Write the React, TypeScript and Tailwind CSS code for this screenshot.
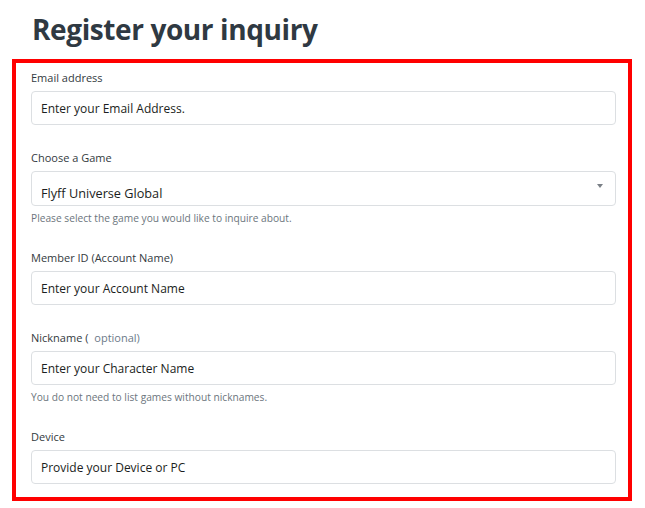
import React from "react";

const labelCls = "block text-[11px] leading-4 text-[#333a40] mb-[5px]";
const inputCls =
  "block w-full h-[34px] rounded-[4px] border border-[#dcdfe2] bg-white px-[9px] text-[12px] text-[#1b1e21] placeholder:text-[#1b1e21] outline-none";
const helpCls = "mt-[6px] text-[10.2px] leading-[13px] text-[#6c757d]";

function Field({ label, placeholder, help }: { label: React.ReactNode; placeholder: string; help?: string }) {
  return (
    <div>
      <label className={labelCls}>{label}</label>
      <input className={inputCls} placeholder={placeholder} />
      {help && <p className={helpCls}>{help}</p>}
    </div>
  );
}

export default function App() {
  return (
    <div className="min-h-screen bg-white px-3 pb-2 font-['Open_Sans',sans-serif]">
      <h1 className="ml-5 pt-[9px] pb-[10px] text-[28px] font-bold leading-10 tracking-[-0.4px] text-[#2f3942]">
        Register your inquiry
      </h1>

      <div className="mr-[1px] flex flex-col gap-[25px] border-4 border-[#ff0000] pl-[15px] pr-3 pt-[7px] pb-[13px]">
        <Field label="Email address" placeholder="Enter your Email Address." />

        <div>
          <label className={labelCls}>Choose a Game</label>
          <div className="relative">
            <select className="block h-[35px] w-full appearance-none rounded-[4px] border border-[#dcdfe2] bg-white px-[9px] pt-[10px] text-[12.7px] text-[#1b1e21] outline-none">
              <option>Flyff Universe Global</option>
            </select>
            <span className="pointer-events-none absolute right-[13px] top-[13px] h-0 w-0 border-x-[3px] border-t-[4px] border-x-transparent border-t-[#7a7f86]" />
          </div>
          <p className={helpCls}>Please select the game you would like to inquire about.</p>
        </div>

        <Field label="Member ID (Account Name)" placeholder="Enter your Account Name" />

        <Field
          label={
            <>
              Nickname ( <span className="ml-[3px] text-[#6c7a89]">optional)</span>
            </>
          }
          placeholder="Enter your Character Name"
          help="You do not need to list games without nicknames."
        />

        <Field label="Device" placeholder="Provide your Device or PC" />
      </div>
    </div>
  );
}
